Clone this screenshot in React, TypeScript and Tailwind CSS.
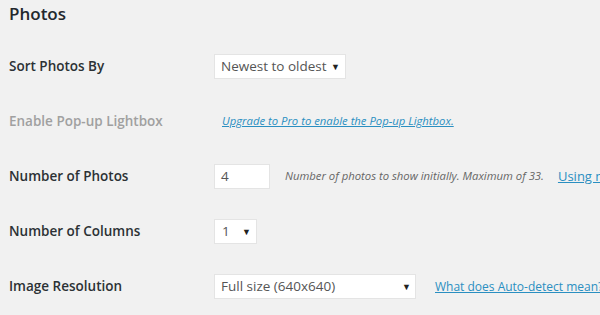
import { ReactNode } from 'react';

function Arrow() {
  return <span className="text-[9px] leading-none text-[#222]">▼</span>;
}

function Row({ label, muted, children }: { label: string; muted?: boolean; children: ReactNode }) {
  return (
    <div className="flex h-[55px] items-center">
      <div className={`w-[205px] shrink-0 text-[13.5px] font-semibold ${muted ? 'text-[#a0a0a0]' : 'text-[#2c3135]'}`}>
        {label}
      </div>
      <div className="flex items-center">{children}</div>
    </div>
  );
}

export default function App() {
  return (
    <div className="h-[315px] w-[600px] overflow-hidden bg-[#f1f1f1] pl-[9px] font-['Open_Sans',sans-serif] text-[#23282d]">
      <h2 className="pt-[1px] text-[17px] leading-[26px] font-semibold">Photos</h2>
      <div className="mt-[12px]">
        <Row label="Sort Photos By">
          <div className="flex h-[25px] w-[132px] items-center justify-between border border-[#e4e4e4] bg-white pr-[5px] pl-[6px] text-[13.5px] text-[#555]">
            <span>Newest to oldest</span>
            <Arrow />
          </div>
        </Row>
        <Row label="Enable Pop-up Lightbox" muted>
          <a className="ml-[8px] text-[11.3px] italic text-[#2a8fc1] underline">Upgrade to Pro to enable the Pop-up Lightbox.</a>
        </Row>
        <Row label="Number of Photos">
          <div className="flex h-[25px] w-[56px] items-center border border-[#e4e4e4] bg-white pl-[6px] text-[13.5px] text-[#555]">4</div>
          <span className="ml-[15px] text-[11.3px] whitespace-nowrap italic text-[#666]">
            Number of photos to show initially. Maximum of 33.
          </span>
          <a className="ml-[14px] text-[13px] whitespace-nowrap text-[#2a8fc1] underline">Using multiple feeds?</a>
        </Row>
        <Row label="Number of Columns">
          <div className="flex h-[25px] w-[43px] items-center justify-between border border-[#e4e4e4] bg-white pr-[5px] pl-[7px] text-[13.5px] text-[#555]">
            <span>1</span>
            <Arrow />
          </div>
        </Row>
        <Row label="Image Resolution">
          <div className="flex h-[25px] w-[202px] items-center justify-between border border-[#e4e4e4] bg-white pr-[4px] pl-[6px] text-[13.5px] text-[#555]">
            <span>Full size (640x640)</span>
            <Arrow />
          </div>
          <a className="ml-[19px] text-[12px] whitespace-nowrap text-[#2a8fc1] underline">What does Auto-detect mean?</a>
        </Row>
      </div>
    </div>
  );
}
